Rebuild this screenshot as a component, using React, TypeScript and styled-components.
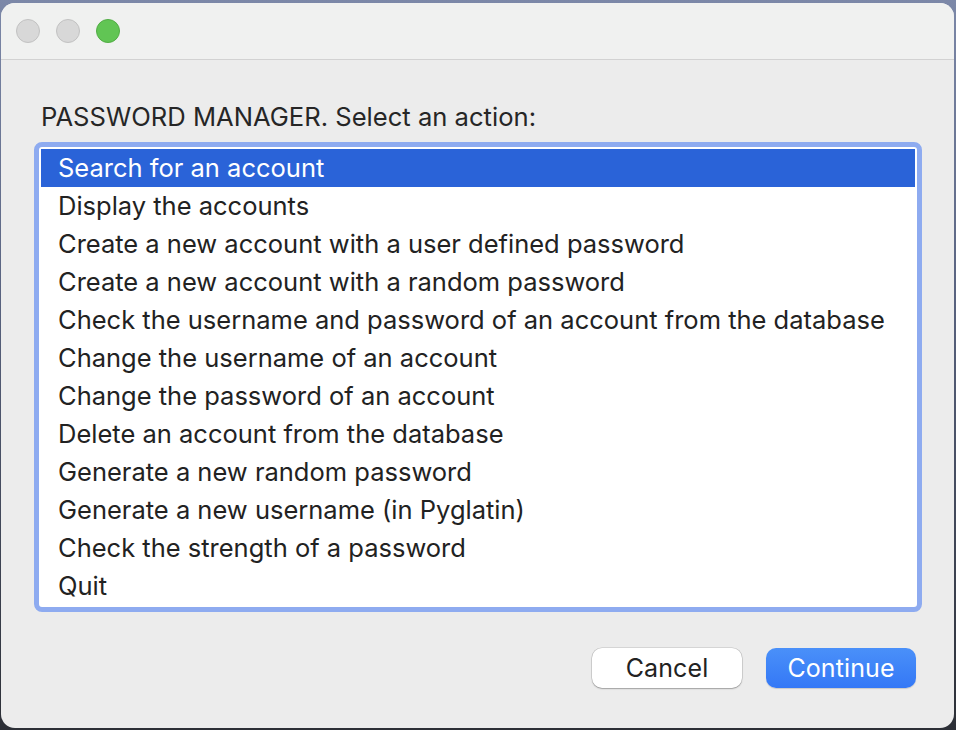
import styled, { createGlobalStyle } from "styled-components";

const GlobalStyle = createGlobalStyle`
  html, body {
    margin: 0;
    padding: 0;
    height: 100%;
  }
  body {
    background: linear-gradient(180deg, #7c88a8 0%, #596380 40%, #2c2f36 100%);
    font-family: Inter, "Noto Sans", "Liberation Sans", sans-serif;
  }
  #root {
    padding: 3px 2px 2px 1px;
  }
`;

const Window = styled.div`
  width: 953px;
  height: 725px;
  border-radius: 14px;
  background: #ececec;
  overflow: hidden;
  display: flex;
  flex-direction: column;
  box-sizing: border-box;
`;

const TitleBar = styled.div`
  height: 57px;
  flex-shrink: 0;
  background: #f0f1f0;
  border-bottom: 1.5px solid #d2d2d2;
  box-sizing: border-box;
  display: flex;
  align-items: center;
  gap: 16px;
  padding: 0 0 0 15px;
`;

const Light = styled.span<{ $color: string; $edge: string }>`
  width: 24px;
  height: 24px;
  border-radius: 50%;
  background: ${({ $color }) => $color};
  border: 1px solid ${({ $edge }) => $edge};
  box-sizing: border-box;
`;

const Content = styled.div`
  flex: 1;
  display: flex;
  flex-direction: column;
  padding: 42px 39px 0 40px;
`;

const Prompt = styled.div`
  font-size: 25.6px;
  color: #262626;
  margin-bottom: 10px;
  line-height: 30px;
`;

const FocusRing = styled.div`
  border: 5px solid #8eabf0;
  border-radius: 8px;
  padding: 2px;
  background: #ffffff;
  margin-left: -7px;
  margin-right: -7px;
`;

const List = styled.ul`
  list-style: none;
  margin: 0;
  padding: 0;
  background: #ffffff;
`;

const Row = styled.li<{ $selected?: boolean }>`
  height: 38px;
  line-height: 38px;
  padding-left: 17px;
  font-size: 25.5px;
  color: ${({ $selected }) => ($selected ? "#ffffff" : "#222222")};
  background: ${({ $selected }) => ($selected ? "#2a63d8" : "transparent")};
  white-space: nowrap;
`;

const Footer = styled.div`
  display: flex;
  justify-content: flex-end;
  gap: 24px;
  margin-top: 36px;
  margin-right: -1px;
`;

const Button = styled.button<{ $primary?: boolean }>`
  width: 150px;
  height: 40px;
  border-radius: 10px;
  font-family: inherit;
  font-size: 25px;
  letter-spacing: 0.1px;
  border: none;
  cursor: pointer;
  color: ${({ $primary }) => ($primary ? "#ffffff" : "#222222")};
  background: ${({ $primary }) =>
    $primary ? "linear-gradient(180deg, #4a90f9 0%, #3478f6 100%)" : "#ffffff"};
  box-shadow: ${({ $primary }) =>
    $primary
      ? "0 1px 1px rgba(0,0,0,0.15)"
      : "0 0 0 0.5px rgba(0,0,0,0.18), 0 1px 1.5px rgba(0,0,0,0.25)"};
`;

const actions = [
  "Search for an account",
  "Display the accounts",
  "Create a new account with a user defined password",
  "Create a new account with a random password",
  "Check the username and password of an account from the database",
  "Change the username of an account",
  "Change the password of an account",
  "Delete an account from the database",
  "Generate a new random password",
  "Generate a new username (in Pyglatin)",
  "Check the strength of a password",
  "Quit",
];

export default function App() {
  return (
    <>
      <GlobalStyle />
      <Window>
        <TitleBar>
          <Light $color="#d8d8d8" $edge="#c2c2c2" />
          <Light $color="#d8d8d8" $edge="#c2c2c2" />
          <Light $color="#61c554" $edge="#52ad45" />
        </TitleBar>
        <Content>
          <Prompt>PASSWORD MANAGER. Select an action:</Prompt>
          <FocusRing>
            <List>
              {actions.map((a, i) => (
                <Row key={a} $selected={i === 0}>
                  {a}
                </Row>
              ))}
            </List>
          </FocusRing>
          <Footer>
            <Button>Cancel</Button>
            <Button $primary>Continue</Button>
          </Footer>
        </Content>
      </Window>
    </>
  );
}
